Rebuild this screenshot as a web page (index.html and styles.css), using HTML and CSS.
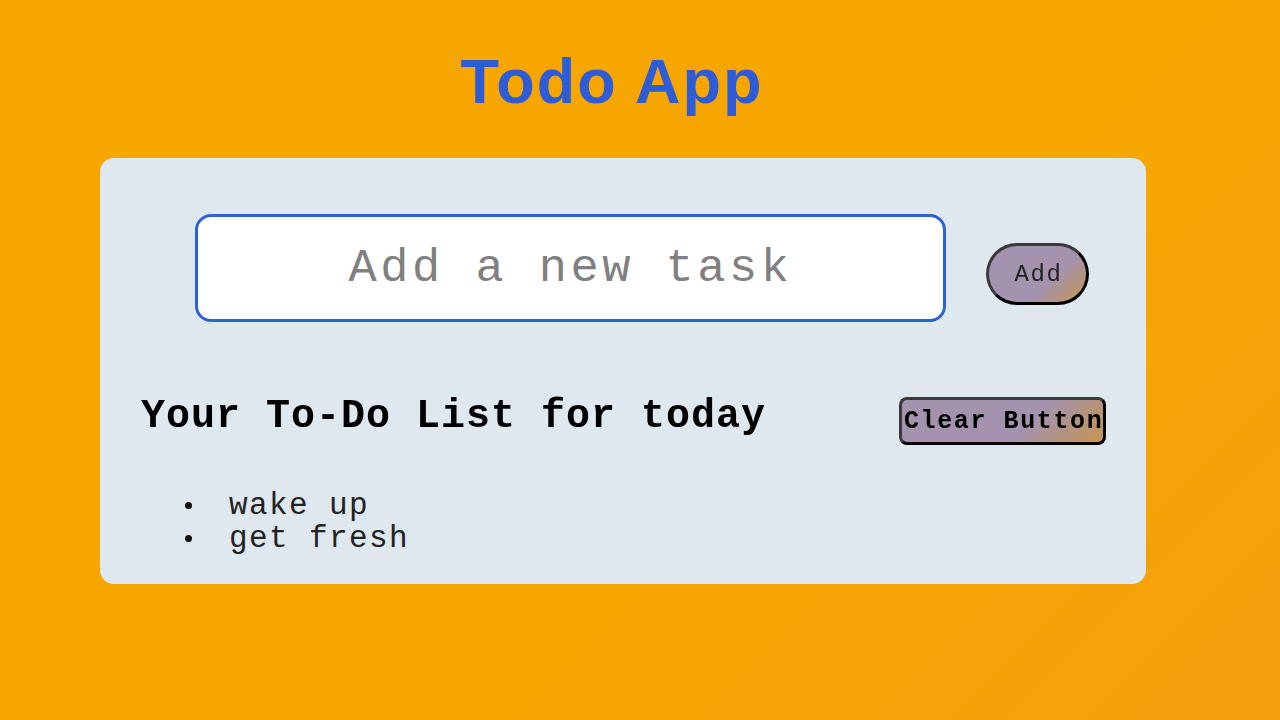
FILE: index.html
```html
<!DOCTYPE html>
<html lang="en">
<head>
<meta charset="utf-8">
<title>Todo App</title>
<link rel="stylesheet" href="styles.css">
</head>
<body>
  <h1 class="title">Todo App</h1>
  <main class="card">
    <div class="input-row">
      <input class="task-input" type="text" placeholder="Add a new task" autofocus>
      <button class="btn btn-add">Add</button>
    </div>
    <div class="list-header">
      <h2 class="list-title">Your To-Do List for today</h2>
      <button class="btn btn-clear">Clear Button</button>
    </div>
    <ul class="todo-list">
      <li>wake up</li>
      <li>get fresh</li>
    </ul>
  </main>
</body>
</html>
```
FILE: styles.css
```css
html, body {
  margin: 0;
  padding: 0;
  height: 100%;
}
body {
  background: linear-gradient(135deg, #f7a600 0%, #f7a600 60%, #f4a010 100%);
  font-family: "Courier New", "Liberation Mono", monospace;
  overflow: hidden;
}
.title {
  margin: 0;
  padding: 48px 56px 0 0;
  height: 108px;
  box-sizing: border-box;
  text-align: center;
  font-family: "Liberation Sans", Arial, sans-serif;
  font-weight: bold;
  font-size: 63px;
  letter-spacing: 2px;
  line-height: 66px;
  color: #2e5bd8;
}
.card {
  margin: 50px 0 0 100px;
  width: 1046px;
  height: 426px;
  box-sizing: border-box;
  background: #dfe7ef;
  border-radius: 14px;
  padding: 56px 40px 0 41px;
}
.input-row {
  display: flex;
  align-items: baseline;
  gap: 40px;
  padding-left: 54px;
}
.task-input {
  width: 751px;
  height: 108px;
  box-sizing: border-box;
  border: 3px solid #2a62d4;
  border-radius: 16px;
  background: #fff;
  font-family: "Courier New", "Liberation Mono", monospace;
  font-size: 47px;
  letter-spacing: 3.5px;
  text-align: center;
  color: #222;
  outline: none;
  padding: 0 10px;
  caret-color: #111;
}
.task-input::placeholder {
  color: #808080;
}
.btn {
  font-family: "Courier New", "Liberation Mono", monospace;
  color: #222;
  background: linear-gradient(135deg, #a393ae 0%, #a393ae 62%, #c59550 100%);
  cursor: pointer;
}
.btn-add {
  width: 103px;
  height: 62px;
  border-radius: 31px;
  border: 3px outset #3a3a3a;
  font-size: 24px;
  letter-spacing: 1.6px;
  padding: 0 0 0 2px;
}
.list-header {
  display: flex;
  justify-content: space-between;
  align-items: flex-start;
  margin-top: 73px;
}
.list-title {
  margin: 0;
  font-size: 40px;
  letter-spacing: 1px;
  font-weight: bold;
  color: #000;
  line-height: 44px;
}
.btn-clear {
  margin-top: 2px;
  width: 207px;
  height: 48px;
  border-radius: 8px;
  border: 3px outset #3a3a3a;
  font-size: 25px;
  letter-spacing: 1.6px;
  font-weight: bold;
  color: #000;
  padding: 0 0 0 2px;
  white-space: nowrap;
  overflow: hidden;
}
.todo-list {
  list-style: none;
  margin: 44px 0 0;
  padding-left: 44px;
  font-size: 31px;
  letter-spacing: 1.4px;
  line-height: 33px;
  color: #222;
}
.todo-list li::before {
  content: "";
  display: inline-block;
  width: 7px;
  height: 7px;
  border-radius: 50%;
  background: #111;
  margin-right: 37px;
  vertical-align: middle;
}
```
